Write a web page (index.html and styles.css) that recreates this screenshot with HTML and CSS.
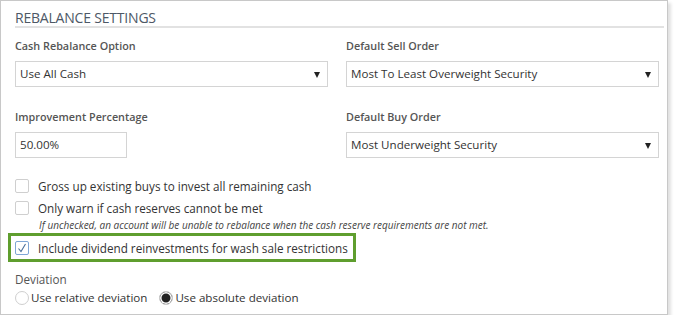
FILE: index.html
```html
<!DOCTYPE html>
<html lang="en">
<head>
    <meta charset="UTF-8">
    <title>Rebalance Settings</title>
    <link rel="stylesheet" href="styles.css">
</head>
<body>
    <div class="panel">
        <h2 class="panel-title">REBALANCE SETTINGS</h2>

        <div class="row first">
            <div class="field">
                <label class="field-label">Cash Rebalance Option</label>
                <div class="select">Use All Cash<span class="caret"></span></div>
            </div>
            <div class="field">
                <label class="field-label">Default Sell Order</label>
                <div class="select">Most To Least Overweight Security<span class="caret"></span></div>
            </div>
        </div>

        <div class="row">
            <div class="field">
                <label class="field-label">Improvement Percentage</label>
                <div class="text-input">50.00%</div>
            </div>
            <div class="field">
                <label class="field-label">Default Buy Order</label>
                <div class="select">Most Underweight Security<span class="caret"></span></div>
            </div>
        </div>

        <div class="checks">
            <div class="check"><span class="box"></span>Gross up existing buys to invest all remaining cash</div>
            <div class="check"><span class="box"></span>Only warn if cash reserves cannot be met</div>
            <div class="note">If unchecked, an account will be unable to rebalance when the cash reserve requirements are not met.</div>
            <div class="check highlight">
                <span class="box checked">
                    <svg width="10" height="10" viewBox="0 0 10 10"><path d="M1.5 5.5 L4 8.5 L8.5 1" fill="none" stroke="#4a6f9a" stroke-width="1.1"/></svg>
                </span>Include dividend reinvestments for wash sale restrictions
            </div>
        </div>

        <div class="deviation">
            <div class="deviation-label">Deviation</div>
            <div class="radios">
                <span class="radio"></span><span class="radio-text">Use relative deviation</span>
                <span class="radio on"></span><span class="radio-text">Use absolute deviation</span>
            </div>
        </div>
    </div>
</body>
</html>
```

FILE: styles.css
```css
body {
    margin: 0;
    font-family: "Open Sans", Arial, sans-serif;
    background: #fff;
    color: #333;
}
.panel {
    width: 652px;
    height: 305px;
    border: 1px solid #c8c8c8;
    box-shadow: 3px 3px 3px rgba(0, 0, 0, 0.12);
    padding: 8px 0 0 14px;
}
.panel-title {
    margin: 0 3px 0 0;
    font-size: 14px;
    font-weight: normal;
    color: #4d5866;
    line-height: 17px;
    border-bottom: 2px solid #e2e2e2;
    letter-spacing: -0.2px;
}
.row {
    display: flex;
    gap: 18px;
}
.field {
    width: 313px;
}
.field-label {
    display: block;
    font-size: 10.8px;
    font-weight: 600;
    color: #555;
    line-height: 16px;
    margin: 22px 0 7px;
}
.row.first .field-label {
    margin-top: 10px;
}
.select, .text-input {
    box-sizing: border-box;
    height: 26px;
    border: 1px solid #d4d4d4;
    font-size: 11.6px;
    line-height: 24px;
    padding-left: 4px;
    color: #333;
    position: relative;
}
.select {
    width: 313px;
}
.text-input {
    width: 112px;
}
.caret {
    position: absolute;
    right: 7px;
    top: 10px;
    width: 0;
    height: 0;
    border-left: 3.5px solid transparent;
    border-right: 3.5px solid transparent;
    border-top: 6px solid #222;
}
.checks {
    margin-top: 19px;
}
.check {
    display: flex;
    align-items: center;
    font-size: 11.7px;
    line-height: 16px;
    color: #333;
    height: 17px;
    margin-bottom: 5px;
    white-space: nowrap;
}
.box {
    box-sizing: border-box;
    width: 14px;
    height: 14px;
    border: 1px solid #cfcfcf;
    border-radius: 2px;
    margin-right: 9px;
    display: inline-flex;
    align-items: center;
    justify-content: center;
    flex-shrink: 0;
}
.box.checked {
    border-color: #7fa6d6;
}
.note {
    font-size: 10px;
    font-style: italic;
    color: #444;
    margin: -3px 0 0 24px;
    line-height: 15px;
}
.check.highlight {
    box-sizing: border-box;
    width: 348px;
    height: 29px;
    border: 3px solid #5f9e2e;
    margin: 0 0 0 -7px;
    padding-left: 4px;
}
.deviation {
    margin-top: 9px;
}
.deviation-label {
    font-size: 11.7px;
    color: #555;
    line-height: 16px;
}
.radios {
    display: flex;
    align-items: center;
    margin-top: 3px;
    font-size: 11.6px;
    color: #333;
}
.radio {
    box-sizing: border-box;
    width: 14px;
    height: 14px;
    border: 1px solid #cfcfcf;
    border-radius: 50%;
    margin-right: 2px;
}
.radio.on {
    background: #222;
    box-shadow: inset 0 0 0 1.5px #fff;
    margin-left: 12px;
}
```
